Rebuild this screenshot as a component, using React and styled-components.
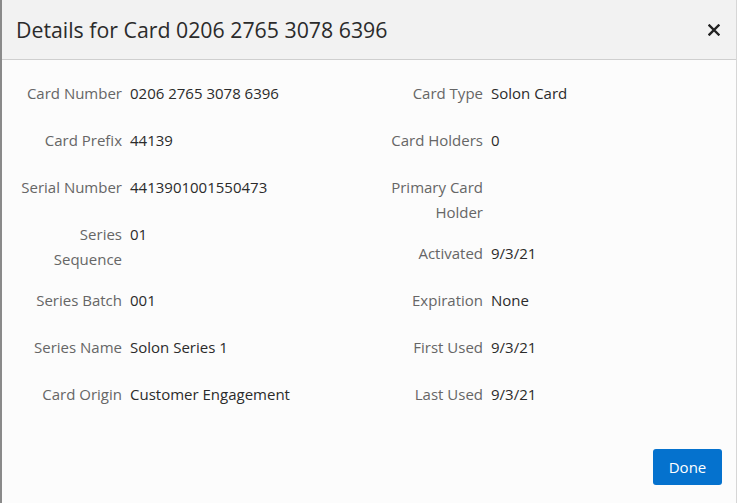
import React from "react";
import styled, { createGlobalStyle } from "styled-components";

const GlobalStyle = createGlobalStyle`
  html, body {
    margin:0;
    padding:0;
    height:100%;
    background:#fcfcfc;
  }
  #root {
    height:100%;
  }
`;

const Modal = styled.div`
  height:100vh;
  box-sizing:border-box;
  display:flex;
  flex-direction:column;
  background:#fcfcfc;
  border-left:2px solid #8a8a8a;
  border-right:1px solid #d6d6d6;
  font-family:"Open Sans", "Noto Sans", sans-serif;
`;

const Header = styled.div`
  height:59px;
  display:flex;
  align-items:center;
  justify-content:space-between;
  padding:0 14px 0 14px;
  background:#f2f2f2;
  border-bottom:1px solid #cfcfcf;
`;

const Title = styled.h2`
  margin:0;
  font-size:21.3px;
  font-weight:400;
  color:#2b2b2b;
`;

const CloseButton = styled.button`
  border:0;
  background:none;
  padding:0;
  width:16px;
  height:16px;
  display:flex;
  align-items:center;
  justify-content:center;
  cursor:pointer;
`;

const Body = styled.div`
  flex:1;
  display:grid;
  grid-template-columns:361px 1fr;
  align-content:start;
  padding:21px 0 0 18px;
`;

const Column = styled.div`
  display:flex;
  flex-direction:column;
`;

const Row = styled.div`
  display:flex;
  min-height:31px;
  margin-bottom:16px;
  font-size:15px;
  line-height:25px;
`;

const Label = styled.div`
  width:102px;
  flex:none;
  text-align:right;
  color:#666;
  padding-right:8px;
`;

const Value = styled.div`
  color:#2b2b2b;
`;

const Footer = styled.div`
  display:flex;
  justify-content:flex-end;
  padding:0 14px 18px 0;
`;

const DoneButton = styled.button`
  width:69px;
  height:36px;
  border:0;
  border-radius:3px;
  background:#0572ce;
  color:#fff;
  font-family:inherit;
  font-size:15px;
  cursor:pointer;
`;

const left = [
  ["Card Number", "0206 2765 3078 6396"],
  ["Card Prefix", "44139"],
  ["Serial Number", "4413901001550473"],
  ["Series Sequence", "01"],
  ["Series Batch", "001"],
  ["Series Name", "Solon Series 1"],
  ["Card Origin", "Customer Engagement"],
];

const right = [
  ["Card Type", "Solon Card"],
  ["Card Holders", "0"],
  ["Primary Card Holder", ""],
  ["Activated", "9/3/21"],
  ["Expiration", "None"],
  ["First Used", "9/3/21"],
  ["Last Used", "9/3/21"],
];

const DetailColumn = ({ items }) => (
  <Column>
    {items.map(([label, value]) => (
      <Row key={label}>
        <Label>{label}</Label>
        <Value>{value}</Value>
      </Row>
    ))}
  </Column>
);

const App = () => {
  return (
    <Modal>
      <GlobalStyle />
      <Header>
        <Title>Details for Card 0206 2765 3078 6396</Title>
        <CloseButton aria-label="Close">
          <svg width="12" height="12" viewBox="0 0 12 12">
            <path d="M1.5 1.5 L10.5 10.5 M10.5 1.5 L1.5 10.5" stroke="#222" strokeWidth="2.4" strokeLinecap="square" />
          </svg>
        </CloseButton>
      </Header>
      <Body>
        <DetailColumn items={left} />
        <DetailColumn items={right} />
      </Body>
      <Footer>
        <DoneButton>Done</DoneButton>
      </Footer>
    </Modal>
  );
};

export default App;
